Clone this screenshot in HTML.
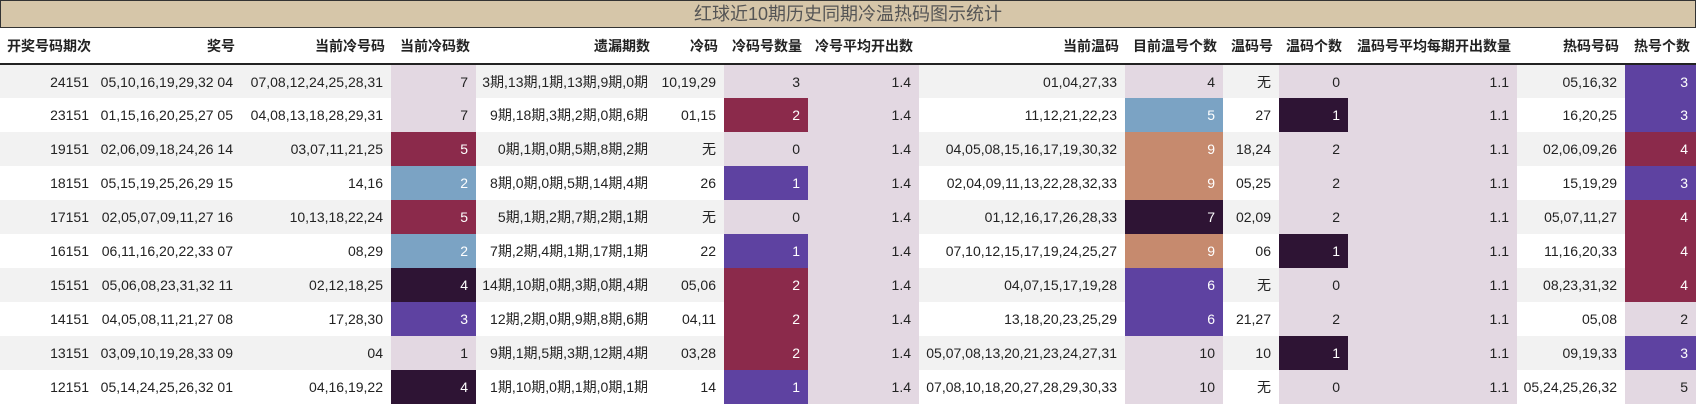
<!DOCTYPE html>
<html><head><meta charset="utf-8"><style>
*{margin:0;padding:0;box-sizing:border-box}
body{width:1696px;height:405px;overflow:hidden;background:#fff;font-family:"Liberation Sans","Noto Sans CJK SC",sans-serif;font-size:14px;color:#222}
.title{height:28px;background:#d6c6a9;border:1px solid #333;text-align:center;font-size:18px;line-height:26px;color:#555}
table{border-collapse:collapse;table-layout:fixed;width:1696px}
td,th{text-align:right;padding:0 8px 0 0;white-space:nowrap;overflow:hidden}
th{height:36px;font-weight:bold;border-bottom:2px solid #222;font-size:14px;padding-right:6px}
td{height:34px}
tr.o td{background:#f2f2f2}
tr.e td{background:#fff}
tr td.l{background:#e3d8e2}
tr td.m{background:#8b2a4b;color:#fff}
tr td.b{background:#7ba3c4;color:#fff}
tr td.d{background:#2e1434;color:#fff}
tr td.p{background:#5e42a1;color:#fff}
tr td.s{background:#c68a6e;color:#fff}
</style></head><body>
<div class="title">红球近10期历史同期冷温热码图示统计</div>
<table>
<colgroup><col style="width:97px"><col style="width:144px"><col style="width:150px"><col style="width:85px"><col style="width:180px"><col style="width:68px"><col style="width:84px"><col style="width:111px"><col style="width:206px"><col style="width:98px"><col style="width:56px"><col style="width:69px"><col style="width:169px"><col style="width:108px"><col style="width:71px"></colgroup>
<tr><th>开奖号码期次</th><th>奖号</th><th>当前冷号码</th><th>当前冷码数</th><th>遗漏期数</th><th>冷码</th><th>冷码号数量</th><th>冷号平均开出数</th><th>当前温码</th><th>目前温号个数</th><th>温码号</th><th>温码个数</th><th>温码号平均每期开出数量</th><th>热码号码</th><th>热号个数</th></tr>
<tr class="o"><td>24151</td><td>05,10,16,19,29,32 04</td><td>07,08,12,24,25,28,31</td><td class="l">7</td><td>3期,13期,1期,13期,9期,0期</td><td>10,19,29</td><td class="l">3</td><td class="l">1.4</td><td>01,04,27,33</td><td class="l">4</td><td>无</td><td class="l">0</td><td class="l">1.1</td><td>05,16,32</td><td class="p">3</td></tr>
<tr class="e"><td>23151</td><td>01,15,16,20,25,27 05</td><td>04,08,13,18,28,29,31</td><td class="l">7</td><td>9期,18期,3期,2期,0期,6期</td><td>01,15</td><td class="m">2</td><td class="l">1.4</td><td>11,12,21,22,23</td><td class="b">5</td><td>27</td><td class="d">1</td><td class="l">1.1</td><td>16,20,25</td><td class="p">3</td></tr>
<tr class="o"><td>19151</td><td>02,06,09,18,24,26 14</td><td>03,07,11,21,25</td><td class="m">5</td><td>0期,1期,0期,5期,8期,2期</td><td>无</td><td class="l">0</td><td class="l">1.4</td><td>04,05,08,15,16,17,19,30,32</td><td class="s">9</td><td>18,24</td><td class="l">2</td><td class="l">1.1</td><td>02,06,09,26</td><td class="m">4</td></tr>
<tr class="e"><td>18151</td><td>05,15,19,25,26,29 15</td><td>14,16</td><td class="b">2</td><td>8期,0期,0期,5期,14期,4期</td><td>26</td><td class="p">1</td><td class="l">1.4</td><td>02,04,09,11,13,22,28,32,33</td><td class="s">9</td><td>05,25</td><td class="l">2</td><td class="l">1.1</td><td>15,19,29</td><td class="p">3</td></tr>
<tr class="o"><td>17151</td><td>02,05,07,09,11,27 16</td><td>10,13,18,22,24</td><td class="m">5</td><td>5期,1期,2期,7期,2期,1期</td><td>无</td><td class="l">0</td><td class="l">1.4</td><td>01,12,16,17,26,28,33</td><td class="d">7</td><td>02,09</td><td class="l">2</td><td class="l">1.1</td><td>05,07,11,27</td><td class="m">4</td></tr>
<tr class="e"><td>16151</td><td>06,11,16,20,22,33 07</td><td>08,29</td><td class="b">2</td><td>7期,2期,4期,1期,17期,1期</td><td>22</td><td class="p">1</td><td class="l">1.4</td><td>07,10,12,15,17,19,24,25,27</td><td class="s">9</td><td>06</td><td class="d">1</td><td class="l">1.1</td><td>11,16,20,33</td><td class="m">4</td></tr>
<tr class="o"><td>15151</td><td>05,06,08,23,31,32 11</td><td>02,12,18,25</td><td class="d">4</td><td>14期,10期,0期,3期,0期,4期</td><td>05,06</td><td class="m">2</td><td class="l">1.4</td><td>04,07,15,17,19,28</td><td class="p">6</td><td>无</td><td class="l">0</td><td class="l">1.1</td><td>08,23,31,32</td><td class="m">4</td></tr>
<tr class="e"><td>14151</td><td>04,05,08,11,21,27 08</td><td>17,28,30</td><td class="p">3</td><td>12期,2期,0期,9期,8期,6期</td><td>04,11</td><td class="m">2</td><td class="l">1.4</td><td>13,18,20,23,25,29</td><td class="p">6</td><td>21,27</td><td class="l">2</td><td class="l">1.1</td><td>05,08</td><td class="l">2</td></tr>
<tr class="o"><td>13151</td><td>03,09,10,19,28,33 09</td><td>04</td><td class="l">1</td><td>9期,1期,5期,3期,12期,4期</td><td>03,28</td><td class="m">2</td><td class="l">1.4</td><td>05,07,08,13,20,21,23,24,27,31</td><td class="l">10</td><td>10</td><td class="d">1</td><td class="l">1.1</td><td>09,19,33</td><td class="p">3</td></tr>
<tr class="e"><td>12151</td><td>05,14,24,25,26,32 01</td><td>04,16,19,22</td><td class="d">4</td><td>1期,10期,0期,1期,0期,1期</td><td>14</td><td class="p">1</td><td class="l">1.4</td><td>07,08,10,18,20,27,28,29,30,33</td><td class="l">10</td><td>无</td><td class="l">0</td><td class="l">1.1</td><td>05,24,25,26,32</td><td class="l">5</td></tr>
</table>
</body></html>
